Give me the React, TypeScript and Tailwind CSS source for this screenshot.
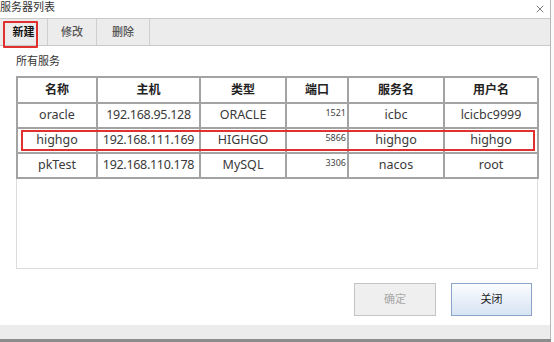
import { X } from "lucide-react";

const rows = [
  { name: "oracle", host: "192.168.95.128", type: "ORACLE", port: "1521", svc: "icbc", user: "lcicbc9999" },
  { name: "highgo", host: "192.168.111.169", type: "HIGHGO", port: "5866", svc: "highgo", user: "highgo" },
  { name: "pkTest", host: "192.168.110.178", type: "MySQL", port: "3306", svc: "nacos", user: "root" },
];

const headers = ["名称", "主机", "类型", "端口", "服务名", "用户名"];

export default function App() {
  return (
    <div
      className="relative w-[554px] h-[342px] overflow-hidden bg-[#fafafa] text-[#222]"
      style={{ fontFamily: '"Noto Sans", "Noto Sans CJK SC", sans-serif' }}
    >
      <div className="flex flex-col w-[551px] h-[339px] bg-white border-r border-[#b8b8b8]">
        {/* title bar */}
        <div className="flex items-start justify-between h-[18px]">
          <span className="text-[11px] leading-[13px] text-[#333]">服务器列表</span>
          <X className="mt-[3px] mr-[4px] h-[12px] w-[12px] text-[#444]" strokeWidth={1.4} />
        </div>

        {/* toolbar */}
        <div className="flex h-[28px] bg-[#ececec] border-y border-[#c9c9c9] text-[11px] font-medium">
          <div className="w-[48px] flex items-center justify-center border-r border-[#d0d0d0] text-[#111] font-semibold">新建</div>
          <div className="w-[49px] flex items-center justify-center border-r border-[#d0d0d0] text-[#555]">修改</div>
          <div className="w-[53px] flex items-center justify-center border-r border-[#d0d0d0] text-[#555]">删除</div>
        </div>

        {/* content */}
        <div className="flex-1 flex flex-col px-[16px]">
          <div className="pt-[8px] pb-[8px] text-[11px] leading-[14px] text-[#333]">所有服务</div>
          <div className="w-[522px] h-[193px] border border-[#dcdcdc]">
            <div className="grid grid-cols-[80px_103px_86px_62px_96px_94px] border-l-2 border-t-2 border-[#a3a3a3] -ml-px -mt-px">
              {headers.map((h) => (
                <div
                  key={h}
                  className="h-[26px] flex items-center justify-center border-r-2 border-b-2 border-[#a3a3a3] text-[12px] font-bold text-[#222]"
                >
                  {h}
                </div>
              ))}
              {rows.map((r) => (
                <div key={r.name} className="contents">
                  <div className="h-[25px] flex items-center justify-center border-r-2 border-b-2 border-[#a3a3a3] text-[12.5px] text-[#3a3a3a]">{r.name}</div>
                  <div className="h-[25px] flex items-center justify-center border-r-2 border-b-2 border-[#a3a3a3] text-[12.5px] text-[#3a3a3a] tracking-[-0.3px]">{r.host}</div>
                  <div className="h-[25px] flex items-center justify-center border-r-2 border-b-2 border-[#a3a3a3] text-[12.5px] text-[#3a3a3a]">{r.type}</div>
                  <div className="h-[25px] flex items-start justify-end pt-[4px] pr-[1px] border-r-2 border-b-2 border-[#a3a3a3] text-[9px] leading-[10px] text-[#444]">{r.port}</div>
                  <div className="h-[25px] flex items-center justify-center border-r-2 border-b-2 border-[#a3a3a3] text-[12.5px] text-[#3a3a3a]">{r.svc}</div>
                  <div className="h-[25px] flex items-center justify-center border-r-2 border-b-2 border-[#a3a3a3] text-[12.5px] text-[#3a3a3a]">{r.user}</div>
                </div>
              ))}
            </div>
          </div>

          {/* buttons */}
          <div className="flex justify-end gap-[15px] pt-[14px] pr-[2px]">
            <div className="w-[82px] h-[33px] flex items-center justify-center border border-[#c4c4c4] bg-[#efefef] text-[11px] text-[#a8a8a8]">
              确定
            </div>
            <div className="w-[81px] h-[33px] flex items-center justify-center border border-[#8aa4c8] bg-gradient-to-b from-[#fbfcfe] to-[#d6e4f3] text-[11px] text-[#222]">
              关闭
            </div>
          </div>
        </div>

        {/* bottom strip */}
        <div className="h-[14px] bg-[#ececec]" />
      </div>
      <div className="h-[3px] w-[551px] bg-[#8c8c8c]" />

      {/* red annotation boxes */}
      <div className="absolute left-[3px] top-[21px] w-[35px] h-[27px] border-2 border-[#e03030] rounded-[1px]" />
      <div className="absolute left-[21px] top-[130px] w-[514px] h-[21px] border-2 border-[#e03030]" />
    </div>
  );
}
